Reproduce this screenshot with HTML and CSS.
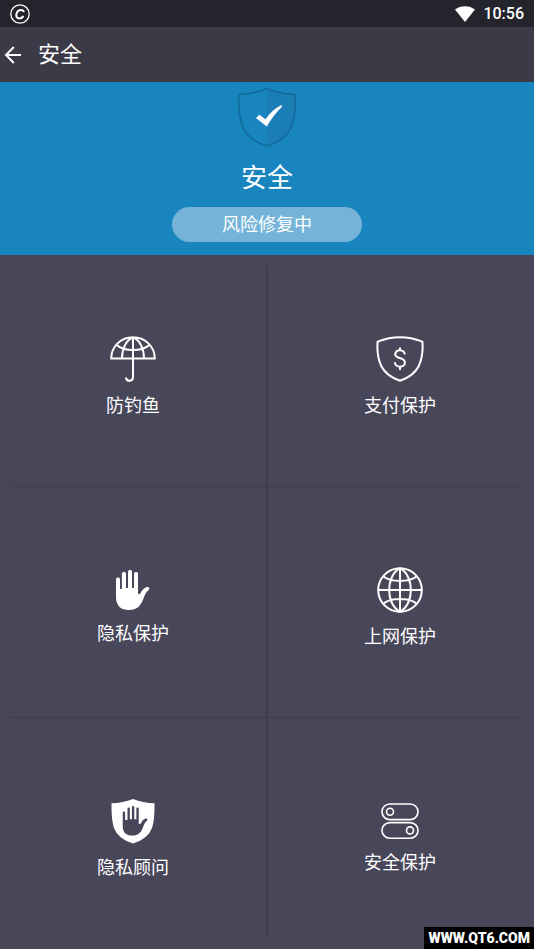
FILE: index.html
```html
<!DOCTYPE html>
<html lang="zh-CN">
<head>
<meta charset="utf-8">
<meta name="viewport" content="width=device-width, initial-scale=1">
<title>安全</title>
<link rel="stylesheet" href="styles.css">
</head>
<body>
<div class="status">
  <svg class="line" width="20" height="20" viewBox="0 0 20 20" aria-hidden="true"><circle cx="10" cy="10" r="9.2" stroke-width="1.3"/><path d="M13.8 8.2C13.4 5.4 8.6 5.2 7 8.4C5.6 11.6 6.4 14.4 9 14.4C11.2 14.4 12.6 13.4 13.2 11.8" stroke-width="2"/></svg>
  <div class="status-right">
    <svg width="20" height="16" viewBox="0 0 20 16" aria-hidden="true"><path fill="#fff" d="M0 3.6C5.6-.9 14.4-.9 20 3.6L10 16Z"/></svg>
    <span class="clock">10:56</span>
  </div>
</div>
<header class="bar">
  <button class="back" type="button" aria-label="返回"><svg class="line" width="18" height="18" viewBox="0 0 18 18"><path stroke-width="2" d="M17 9H2M9.8 1L2 9L9.8 17"/></svg></button>
  <h1 class="title">安全</h1>
</header>
<main class="main">
  <section class="hero">
    <svg width="60" height="60" viewBox="0 0 60 60" aria-hidden="true">
      <path fill="#1a7db4" d="M30 1.5Q43 7 58.3 7.5Q58.8 27 55 38Q50 53 30 59Z"/>
      <path fill="none" stroke="#136a9b" stroke-width="1.6" stroke-linejoin="round" d="M30 1.5Q43 7 58.3 7.5Q58.8 27 55 38Q50 53 30 59Q10 53 5 38Q1.2 27 1.7 7.5Q17 7 30 1.5Z"/>
      <path fill="#fff" d="M19 31L22.3 27.8L28.6 32.3Q34.5 23 44.5 18L45 19.8Q36.5 28 29.8 39.5Z"/>
    </svg>
    <h2 class="state">安全</h2>
    <button class="pill" type="button">风险修复中</button>
  </section>
  <nav class="grid">
    <a class="cell" href="#phishing">
      <svg class="line" width="46" height="46" viewBox="0 0 46 46" aria-hidden="true"><path d="M1.2 22.5C1.2 10.5 11 1.2 23 1.2S44.8 10.5 44.8 22.5ZM23 1.2V40.5Q23 44.8 19.5 44.8Q16.3 44.8 15.8 41.5M12 22.5C12 13 16 4 23 1.2C30 4 34 13 34 22.5M6.8 9Q12 14 23 14T39.2 9"/></svg>
      <span>防钓鱼</span>
    </a>
    <a class="cell" href="#payment">
      <svg class="line" width="48" height="46" viewBox="0 0 48 46" aria-hidden="true"><path d="M24 1.2Q35 1.2 46.4 5.6Q47.6 20 42.5 30.5Q37.5 40 24 44.8Q10.5 40 5.5 30.5Q.4 20 1.6 5.6Q13 1.2 24 1.2Z"/><path d="M28.7 18.5C28.4 13 19.2 13.1 19.2 18.2C19.2 23.2 28.9 20.9 28.9 26.7C28.9 32.3 19 32 18.9 26.2M24 11.5V14.8M24 30.5V34"/></svg>
      <span>支付保护</span>
    </a>
    <a class="cell" href="#privacy">
      <svg width="36" height="40" viewBox="0 0 36 40" aria-hidden="true"><path fill="#fff" d="M1 9.5C1 6.9 5 6.9 5 9.5V19H6.9V4C6.9 1.4 11 1.4 11 4V18H13V2C13-.6 17-.6 17 2V18H19V4C19 1.4 23 1.4 23 4V23.5Q23.7 25 25.3 23.6Q27.5 18.6 31.8 17Q35 16.4 34.2 19.2Q30.6 22.2 29 27C26 36 22 40 14 40C5.5 40 1 35.5 1 27Z"/></svg>
      <span>隐私保护</span>
    </a>
    <a class="cell" href="#network">
      <svg class="line" width="46" height="46" viewBox="0 0 46 46" aria-hidden="true"><circle cx="23" cy="23" r="21.8"/><path d="M23 1.2V44.8M1.2 23H44.8M23 1.2C8.5 9 8.5 37 23 44.8C37.5 37 37.5 9 23 1.2M6.2 9.3Q12 14 23 14T39.8 9.3M6.2 36.7Q12 32 23 32T39.8 36.7"/></svg>
      <span>上网保护</span>
    </a>
    <a class="cell" href="#advisor">
      <svg width="44" height="46" viewBox="0 0 44 46" aria-hidden="true"><path fill="#fff" d="M22 1Q32 5 43.5 5.3Q43.8 22 41 30Q37 41 22 45.5Q7 41 3 30Q.2 22 .5 5.3Q12 5 22 1Z"/><path fill="#484659" transform="translate(11 8) scale(.74)" d="M1 9.5C1 6.9 4.2 6.9 4.2 9.5V19H7.4V4C7.4 1.4 10.6 1.4 10.6 4V18H13.4V2C13.4-.6 16.6-.6 16.6 2V18H19.4V4C19.4 1.4 22.6 1.4 22.6 4V23.5Q23.7 25 25.3 23.6Q27.5 18.6 31.8 17Q35 16.4 34.2 19.2Q30.6 22.2 29 27C26 36 22 40 14 40C5.5 40 1 36 1 27Z"/></svg>
      <span>隐私顾问</span>
    </a>
    <a class="cell" href="#safety">
      <svg class="line thin" width="38" height="36" viewBox="0 0 38 36" aria-hidden="true"><rect x="1" y="1" width="36" height="15.6" rx="7.8"/><rect x="1" y="19.6" width="36" height="15.6" rx="7.8"/><circle cx="9" cy="8.8" r="3.5"/><circle cx="29" cy="27.4" r="3.5"/></svg>
      <span>安全保护</span>
    </a>
  </nav>
</main>
<div class="mark">WWW.QT6.COM</div>
</body>
</html>
```
FILE: styles.css
```css
* { box-sizing: border-box; }

body {
  margin: 0;
  min-height: 100vh;
  display: flex;
  flex-direction: column;
  background: #484659;
  color: #fff;
  font-family: Roboto, "Noto Sans CJK SC", sans-serif;
}

svg { display: block; }

.line {
  fill: none;
  stroke: #fff;
  stroke-width: 2;
}

.thin { stroke-width: 1.6; }

.status {
  display: flex;
  align-items: center;
  justify-content: space-between;
  height: 27px;
  padding: 0 10px;
  background: #23242c;
}

.status-right {
  display: flex;
  align-items: center;
  gap: 8px;
}

.clock {
  font-size: 16px;
  font-weight: 500;
  line-height: 28px;
}

.bar {
  display: flex;
  align-items: center;
  gap: 16px;
  height: 55px;
  padding: 0 4px;
  background: #3c3a47;
}

.back {
  padding: 0;
  border: 0;
  background: none;
}

.title {
  margin: 0;
  font-size: 22px;
  font-weight: 400;
  line-height: 32px;
}

.main {
  flex: 1;
  display: flex;
  flex-direction: column;
}

.hero {
  display: flex;
  flex-direction: column;
  align-items: center;
  padding: 5px 16px 13px;
  background: #1985bf;
}

.state {
  margin: 13px 0 11px;
  font-size: 26px;
  font-weight: 400;
  line-height: 36px;
}

.pill {
  width: 38%;
  height: 35px;
  padding: 0;
  border: 0;
  border-radius: 18px;
  background: #75b4d8;
  color: #fff;
  font: inherit;
  font-size: 18px;
  line-height: 24px;
}

.grid {
  flex: 1;
  display: grid;
  grid-template-columns: 1fr 1fr;
  grid-template-rows: repeat(3, 1fr);
  background:
    linear-gradient(#3e3c4d, #3e3c4d) center / 2px calc(100% - 22px) no-repeat,
    linear-gradient(#3e3c4d, #3e3c4d) center 33.3% / calc(100% - 22px) 1px no-repeat,
    linear-gradient(#3e3c4d, #3e3c4d) center 66.7% / calc(100% - 22px) 1px no-repeat;
}

.cell {
  display: flex;
  flex-direction: column;
  align-items: center;
  justify-content: center;
  gap: 12px;
  padding: 12px 1px 0 0;
  color: #fff;
  font-size: 18px;
  line-height: 24px;
  text-decoration: none;
}

.mark {
  position: absolute;
  right: 0;
  bottom: 0;
  padding: 0 4px;
  background: #000;
  font-family: Roboto, "Liberation Sans", sans-serif;
  font-size: 14px;
  font-weight: 900;
  line-height: 22px;
}
```
